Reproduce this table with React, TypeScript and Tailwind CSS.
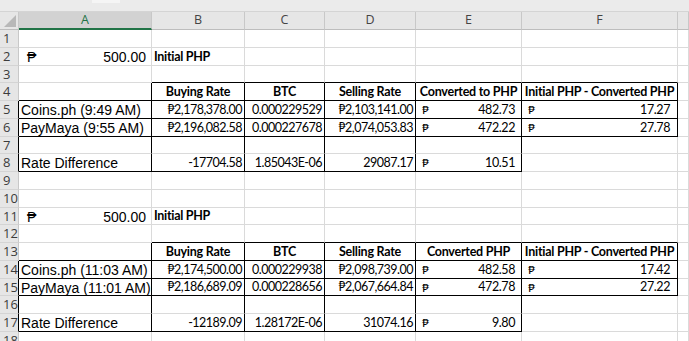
import React from "react";

type CellSpec = {
  content?: React.ReactNode;
  r?: boolean;
  b?: boolean;
  kind?: "label" | "num" | "head" | "acct" | "init" | "bold";
};

const HEIGHTS = [18, 18, 17, 18, 18, 18, 17, 18, 18, 18, 17, 18, 18, 18, 17, 18, 18, 18];

const Acct = ({ v, wide }: { v: string; wide?: boolean }) => (
  <div className={`flex w-full items-end justify-between ${wide ? "pl-[6px] pr-[7px]" : "pl-[6px] pr-[6px]"}`}>
    <span className="text-[12px]">₱</span>
    <span>{v}</span>
  </div>
);

const Cell = ({ spec }: { spec: CellSpec }) => {
  const { content, r, b, kind } = spec;
  let inner = "";
  if (kind === "label") inner = "font-['Liberation_Sans',Arial,sans-serif] text-[14px] pl-[2px]";
  if (kind === "num") inner = "justify-end pr-[2px] font-['Lato',sans-serif] text-[12.5px] tracking-[-0.5px]";
  if (kind === "head") inner = "justify-center font-['Lato',sans-serif] font-bold text-[12.5px] tracking-[-0.25px]";
  if (kind === "bold") inner = "pl-[2px] font-['Lato',sans-serif] font-bold text-[12.5px] tracking-[-0.3px]";
  if (kind === "acct") inner = "font-['Lato',sans-serif] text-[12.5px] tracking-[-0.4px]";
  if (kind === "init") inner = "font-['Liberation_Sans',Arial,sans-serif] text-[14px]";
  return (
    <div
      className={`flex h-full min-h-0 items-center whitespace-nowrap border-r border-b pt-[1px] leading-none text-black ${
        r ? "border-r-black" : "border-r-[#dadada]"
      } ${b ? "border-b-black" : "border-b-[#dadada]"} ${inner}`}
    >
      {content}
    </div>
  );
};

const blankRow = (): CellSpec[] => [{}, {}, {}, {}, {}, {}, {}];

const initRow = (): CellSpec[] => [
  {
    kind: "init",
    content: (
      <div className="flex w-full justify-between pl-[8px] pr-[5px]">
        <span>₱</span>
        <span>500.00</span>
      </div>
    ),
  },
  { kind: "bold", content: "Initial PHP" },
  {},
  {},
  {},
  {},
  {},
];

const aboveRow = (): CellSpec[] => [{}, { b: true }, { b: true }, { b: true }, { b: true }, { b: true }, {}];

const headRow = (e: string): CellSpec[] => [
  { r: true, b: true },
  { r: true, b: true, kind: "head", content: "Buying Rate" },
  { r: true, b: true, kind: "head", content: "BTC" },
  { r: true, b: true, kind: "head", content: "Selling Rate" },
  { r: true, b: true, kind: "head", content: e },
  { r: true, b: true, kind: "head", content: "Initial PHP - Converted PHP" },
  {},
];

const dataRow = (label: string, buy: string, btc: string, sell: string, conv: string, diff: string): CellSpec[] => [
  { r: true, b: true, kind: "label", content: label },
  { r: true, b: true, kind: "num", content: buy },
  { r: true, b: true, kind: "num", content: btc },
  { r: true, b: true, kind: "num", content: sell },
  { r: true, b: true, kind: "acct", content: <Acct v={conv} /> },
  { r: true, b: true, kind: "acct", content: <Acct v={diff} wide /> },
  {},
];

const gapRow = (): CellSpec[] => [{ r: true }, { r: true }, { r: true }, { r: true }, { r: true }, {}, {}];

const diffRow = (buy: string, btc: string, sell: string, conv: string): CellSpec[] => [
  { r: true, b: true, kind: "label", content: "Rate Difference" },
  { r: true, b: true, kind: "num", content: buy },
  { r: true, b: true, kind: "num", content: btc },
  { r: true, b: true, kind: "num", content: sell },
  { r: true, b: true, kind: "acct", content: <Acct v={conv} /> },
  {},
  {},
];

const ROWS: CellSpec[][] = [
  blankRow(),
  initRow(),
  aboveRow(),
  headRow("Converted to PHP"),
  dataRow("Coins.ph (9:49 AM)", "₱2,178,378.00", "0.000229529", "₱2,103,141.00", "482.73", "17.27"),
  dataRow("PayMaya (9:55 AM)", "₱2,196,082.58", "0.000227678", "₱2,074,053.83", "472.22", "27.78"),
  gapRow(),
  diffRow("-17704.58", "1.85043E-06", "29087.17", "10.51"),
  blankRow(),
  blankRow(),
  initRow(),
  aboveRow(),
  headRow("Converted PHP"),
  dataRow("Coins.ph (11:03 AM)", "₱2,174,500.00", "0.000229938", "₱2,098,739.00", "482.58", "17.42"),
  dataRow("PayMaya (11:01 AM)", "₱2,186,689.09", "0.000228656", "₱2,067,664.84", "472.78", "27.22"),
  gapRow(),
  diffRow("-12189.09", "1.28172E-06", "31074.16", "9.80"),
  blankRow(),
];

const boxed = [5, 6, 7, 8, 14, 15, 16, 17];

const heightClass: Record<number, string> = { 17: "h-[17px]", 18: "h-[18px]" };

export default function App() {
  const letters = ["A", "B", "C", "D", "E", "F", ""];
  return (
    <div className="h-[341px] w-[689px] overflow-hidden bg-white">
      {/* top strip of the window */}
      <div className="relative h-[12px] border-b border-[#d4d4d4] bg-[#ebebeb]">
        <div className="absolute left-[92px] top-0 h-[3px] w-[28px] bg-[#f5f5f5]" />
      </div>
      <div className="grid grid-cols-[19px_133px_93px_80px_91px_106px_156px_1fr]">
        {/* column headers */}
        <div className="relative h-[18px] border-r border-b border-r-[#c8c8c8] border-b-[#bdbdbd] bg-[#e6e6e6]">
          <svg className="absolute bottom-[2px] right-[2px]" width="12" height="12" viewBox="0 0 12 12">
            <polygon points="12,0 12,12 0,12" fill="#b8b8b8" />
          </svg>
        </div>
        {letters.map((l, i) => (
          <div
            key={i}
            className={`flex h-[18px] items-center justify-center font-['Open_Sans',sans-serif] text-[12.5px] ${
              i === 0
                ? "border-r border-r-[#c8c8c8] border-b-2 border-b-[#217346] bg-[#d2d2d2] text-[#217346]"
                : "border-r border-b border-r-[#c8c8c8] border-b-[#bdbdbd] bg-[#e6e6e6] text-[#444444]"
            }`}
          >
            {l}
          </div>
        ))}
        {ROWS.map((row, ri) => {
          const n = ri + 1;
          const h = heightClass[HEIGHTS[ri]];
          return (
            <React.Fragment key={n}>
              <div
                className={`${h} flex items-center border-r border-b border-b-[#d4d4d4] bg-[#e6e6e6] pl-[3px] font-['Open_Sans',sans-serif] text-[13px] leading-none text-[#3c3c3c] ${
                  boxed.includes(n) ? "border-r-black" : "border-r-[#c8c8c8]"
                }`}
              >
                {n}
              </div>
              {row.map((spec, ci) => (
                <div key={ci} className={`${h} min-h-0`}>
                  <Cell spec={spec} />
                </div>
              ))}
            </React.Fragment>
          );
        })}
      </div>
    </div>
  );
}
